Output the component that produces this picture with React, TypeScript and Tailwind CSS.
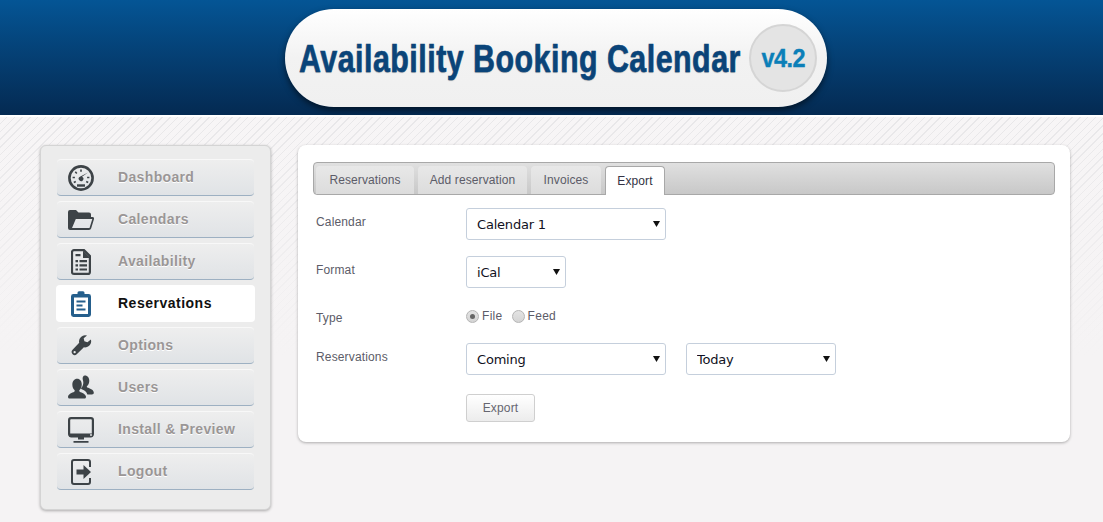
import React from 'react';

const DARK = '#3d4347';

const Gauge = () => (
  <svg width="26" height="26" viewBox="0 0 26 26">
    <circle cx="13" cy="13" r="11.6" fill="none" stroke={DARK} strokeWidth="2.600" />
    <path d="M13 4.500v2.300M7.300 6.800l1.500 1.700M4.600 12.500h2.300M5.800 17.500l2-1M20.200 17.500l-2-1M21.400 12.500h-2.300" stroke={DARK} strokeWidth="1.600" />
    <path d="M20 7.500l-6 4.200a2.300 2.300 0 1 1-2.100 .1z" fill={DARK} />
    <path d="M9 20.500h8" stroke={DARK} strokeWidth="2.400" />
  </svg>
);

const Folder = () => (
  <svg width="26" height="20" viewBox="0 0 26 20">
    <path fillRule="evenodd" d="M0 2a2 2 0 0 1 2-2h6l2.500 2.500H21a2 2 0 0 1 2 2V7h1.500A1.500 1.500 0 0 1 26 9l-2.800 9.300A2.400 2.400 0 0 1 21 20H2a2 2 0 0 1-2-2zM7.800 9L4 18h17.500l2.800-9z" fill={DARK} />
  </svg>
);

const DocList = () => (
  <svg width="20" height="26" viewBox="0 0 20 26">
    <path d="M3 1.100h10L18.900 7v15.900a2 2 0 0 1-2 2H3a2 2 0 0 1-2-2V3.100a2 2 0 0 1 2-2z" fill="none" stroke={DARK} strokeWidth="2.200" />
    <path d="M12 1.500l7.500 7.500H12z" fill={DARK} />
    <path d="M4.500 5h5v2.200h-5zM4.500 11H7v2.200H4.500zM8.500 11h7.500v2.200H8.500zM4.500 15.200H7v2.200H4.500zM8.500 15.200h7.500v2.200H8.500zM4.500 19.400H7v2.200H4.500zM8.500 19.400h7.500v2.200H8.500z" fill={DARK} />
  </svg>
);

const Clipboard = () => (
  <svg width="20" height="26" viewBox="0 0 20 26">
    <path d="M6.500 3V1.800A1.600 1.600 0 0 1 8 .2h4a1.600 1.600 0 0 1 1.500 1.600V3h4.100A2.400 2.400 0 0 1 20 5.400v18.200a2.400 2.400 0 0 1-2.400 2.400H2.400A2.400 2.400 0 0 1 0 23.600V5.400A2.400 2.400 0 0 1 2.400 3z" fill="#255f8c" />
    <path d="M3 6.500h14V23H3z" fill="#fff" />
    <path d="M5.500 9.500h9v2h-9zM5.500 13.500h6v2h-6zM5.500 17.500h9v2h-9z" fill="#255f8c" />
  </svg>
);

const Wrench = () => (
  <svg width="21" height="21" viewBox="0 0 22 22">
    <path d="M20.800 4.600l-3.600 3-3.200-1-.7-3.200 3.500-2.800a6.400 6.400 0 0 0-8.200 7.600L1.400 15.800a3.200 3.200 0 0 0 4.600 4.400l7.500-7.300a6.400 6.400 0 0 0 7.300-8.300z" fill={DARK} />
    <circle cx="3.800" cy="18" r="1.200" fill="#eceeef" />
  </svg>
);

const Users = () => (
  <svg width="26" height="25" viewBox="0 0 27 25">
    <path d="M17.500 0c3 0 4.600 2.600 4.600 5.600 0 2.300-.8 4.200-2.200 5.300-.5.400-.5 1.300.2 1.700 2.200 1 6.500 2 6.700 5.100.1 1.400-.6 2-2 2h-4.700c-.8-3-3.500-4.400-5.800-5.300-.8-.3-.9-1-.4-1.600 1.300-1.500 2-3.400 2-5.500 0-1-.2-2.100-.6-3C14.800 1.800 15.900 0 17.500 0z" fill={DARK} />
    <path d="M9.500 3.500c3 0 4.800 2.700 4.800 6 0 2.500-.9 4.500-2.300 5.700-.5.500-.4 1.200.2 1.600 2.200 1.200 6.200 2.100 6.500 5.200 0 1.400-.7 2-2 2H2c-1.300 0-2-.6-2-2 .3-3.100 4.300-4 6.500-5.200.6-.4.700-1.100.2-1.600C5.300 14 4.500 12 4.500 9.500c0-3.300 2-6 5-6z" fill={DARK} />
  </svg>
);

const Monitor = () => (
  <svg width="26" height="26" viewBox="0 0 26 26">
    <rect x="1.100" y="1.100" width="23.800" height="17.800" rx="2" fill="none" stroke={DARK} strokeWidth="2.200" />
    <path d="M1 16.500h24v2a2 2 0 0 1-2 2H3a2 2 0 0 1-2-2z" fill={DARK} />
    <path d="M10 20h6v2.500h-6zM5.500 24h15v1.800h-15z" fill={DARK} />
    <circle cx="23" cy="18" r=".9" fill="#eceeef" />
  </svg>
);

const Logout = () => (
  <svg width="20" height="26" viewBox="0 0 20 26">
    <path d="M19 8V3a2 2 0 0 0-2-2H3a2 2 0 0 0-2 2v20a2 2 0 0 0 2 2h14a2 2 0 0 0 2-2v-4" fill="none" stroke={DARK} strokeWidth="2" />
    <path d="M5.500 10.500h7V6l7.500 7-7.500 7v-4.500h-7z" fill={DARK} />
  </svg>
);

const navItems = [
  { label: 'Dashboard', icon: <Gauge /> },
  { label: 'Calendars', icon: <Folder /> },
  { label: 'Availability', icon: <DocList /> },
  { label: 'Reservations', icon: <Clipboard />, active: true },
  { label: 'Options', icon: <Wrench /> },
  { label: 'Users', icon: <Users /> },
  { label: 'Install & Preview', icon: <Monitor /> },
  { label: 'Logout', icon: <Logout /> },
];

const tabs = [
  { label: 'Reservations', width: 'w-[98px]' },
  { label: 'Add reservation', width: 'w-[109px]' },
  { label: 'Invoices', width: 'w-[70px]' },
];

const Select = ({ width, value, options }: { width: string; value: string; options: string[] }) => (
  <div className={`relative ${width}`}>
    <select
      defaultValue={value}
      className="h-[32px] w-full appearance-none rounded-[3px] border border-[#c5cfdc] bg-white pt-[2px] pl-[10px] font-['DejaVu_Sans',sans-serif] text-[13px] tracking-[-0.2px] text-[#111122] outline-none"
    >
      {options.map((o) => (
        <option key={o}>{o}</option>
      ))}
    </select>
    <svg className="pointer-events-none absolute top-[12px] right-[6px]" width="7" height="7" viewBox="0 0 7 7">
      <path d="M0 1h7L3.500 7z" fill="#111" />
    </svg>
  </div>
);

const Radio = ({ checked, label }: { checked?: boolean; label: string }) => (
  <label className="flex items-center gap-[3px]">
    <span className="flex h-[13px] w-[13px] items-center justify-center rounded-full border border-[#b5b5b5] bg-gradient-to-b from-[#e4e4e4] to-[#d4d4d4]">
      {checked && <span className="h-[5px] w-[5px] rounded-full bg-[#666]" />}
    </span>
    <span className="text-[12px] tracking-[0.3px] text-[#5c5c68]">{label}</span>
  </label>
);

const Row = ({ label, className, labelClass, children }: { label: string; className: string; labelClass?: string; children: React.ReactNode }) => (
  <div className={`flex ${className}`}>
    <div className={`w-[153px] pl-[3px] text-[12px] tracking-[0.15px] text-[#5c5c68] ${labelClass ?? ''}`}>{label}</div>
    {children}
  </div>
);

export default function App() {
  return (
    <div className="h-[522px] overflow-hidden bg-[#f5f3f4] font-['Liberation_Sans',Arial,sans-serif]">
      <header className="flex h-[117px] justify-center border-b-2 border-white bg-gradient-to-b from-[#045595] to-[#042a52] pl-[9px] shadow-[0_1px_2px_rgba(0,0,0,0.35)]">
        <div className="mt-[9px] flex h-[98px] w-[542px] items-center rounded-[49px] bg-gradient-to-b from-white via-[#f2f2f2] to-[#f0f0f0] pl-[14px] shadow-[0_3px_6px_rgba(0,0,0,0.55)]">
          <span className="mt-[2px] w-[442px] origin-left scale-x-[0.8] whitespace-nowrap text-[38px] font-bold tracking-[0.6px] text-[#0a4479] [-webkit-text-stroke:0.6px_#0a4479] [text-shadow:0_1px_1px_rgba(0,0,0,0.25)]">
            Availability Booking Calendar
          </span>
          <div className="ml-auto mr-[10px] flex h-[68px] w-[68px] shrink-0 items-center justify-center rounded-full border-[2px] border-[#d5d5d5] bg-[#e4e4e4]">
            <span className="scale-x-[0.9] text-[26px] font-bold tracking-[-0.5px] text-[#0b7fb8] [-webkit-text-stroke:0.4px_#0b7fb8]">v4.2</span>
          </div>
        </div>
      </header>

      <main className="flex h-[405px] items-start gap-[27px] bg-[linear-gradient(to_bottom,rgba(245,243,244,0)_0px,rgba(245,243,244,1)_240px),repeating-linear-gradient(135deg,#f7f5f6_0px,#f7f5f6_4.5px,#e8e7e9_4.5px,#e8e7e9_5.5px)] pt-[28px] pl-[40px]">
        <aside className="flex h-[365px] w-[231px] shrink-0 flex-col gap-[5px] rounded-[6px] border border-[#d4d4d4] bg-[#ececec] px-[16px] pt-[13px] shadow-[0_1px_3px_rgba(0,0,0,0.3)]">
          {navItems.map((item) => (
            <a
              key={item.label}
              className={
                item.active
                  ? 'mx-[-1px] flex h-[37px] items-center rounded-[4px] bg-white pl-[1px]'
                  : 'flex h-[37px] items-center rounded-[4px] border-t border-b border-t-[#f8f8f8] border-b-[#9db0c2] bg-gradient-to-b from-[#eeeeee] to-[#e0e3e6]'
              }
            >
              <span className="flex w-[48px] shrink-0 justify-center">{item.icon}</span>
              <span
                className={
                  item.active
                    ? 'ml-[13px] text-[14px] font-bold tracking-[0.5px] text-[#111111]'
                    : 'ml-[13px] text-[14px] font-bold tracking-[0.35px] text-[#9a9696] [text-shadow:0_1px_0_#fff]'
                }
              >
                {item.label}
              </span>
            </a>
          ))}
        </aside>

        <section className="h-[297px] w-[772px] rounded-[8px] bg-white px-[15px] pt-[17px] shadow-[0_1px_3px_rgba(0,0,0,0.3)]">
          <div className="flex h-[33px] items-end gap-[4px] rounded-[4px] border border-[#a8a8a8] bg-gradient-to-b from-[#e0e0e0] to-[#c8c8c8] pl-[2px]">
            {tabs.map((t) => (
              <div
                key={t.label}
                className={`flex h-[28px] items-center justify-center rounded-t-[4px] bg-gradient-to-b from-[#e8e8e8] to-[#dcdcdc] text-[12px] tracking-[0.1px] text-[#5c5c68] ${t.width}`}
              >
                {t.label}
              </div>
            ))}
            <div className="mb-[-1px] flex h-[29px] w-[60px] items-center justify-center rounded-t-[4px] border border-b-0 border-[#a8a8a8] bg-white text-[12px] tracking-[0.1px] text-[#333344]">
              Export
            </div>
          </div>

          <Row label="Calendar" className="mt-[13px]" labelClass="pt-[5px]">
            <Select width="w-[200px]" value="Calendar 1" options={['Calendar 1']} />
          </Row>
          <Row label="Format" className="mt-[16px]" labelClass="pt-[5px]">
            <Select width="w-[100px]" value="iCal" options={['iCal']} />
          </Row>
          <Row label="Type" className="mt-[17px]" labelClass="pt-[4px]">
            <div className="flex gap-[9px]">
              <Radio checked label="File" />
              <Radio label="Feed" />
            </div>
          </Row>
          <Row label="Reservations" className="mt-[16px]" labelClass="pt-[5px]">
            <Select width="w-[200px]" value="Coming" options={['Coming']} />
            <div className="ml-[20px]">
              <Select width="w-[150px]" value="Today" options={['Today']} />
            </div>
          </Row>
          <div className="mt-[19px] pl-[153px]">
            <button className="h-[28px] w-[69px] rounded-[3px] border border-[#cfcfcf] bg-gradient-to-b from-white to-[#ececec] text-[12px] tracking-[0.15px] text-[#666670]">
              Export
            </button>
          </div>
        </section>
      </main>
    </div>
  );
}
